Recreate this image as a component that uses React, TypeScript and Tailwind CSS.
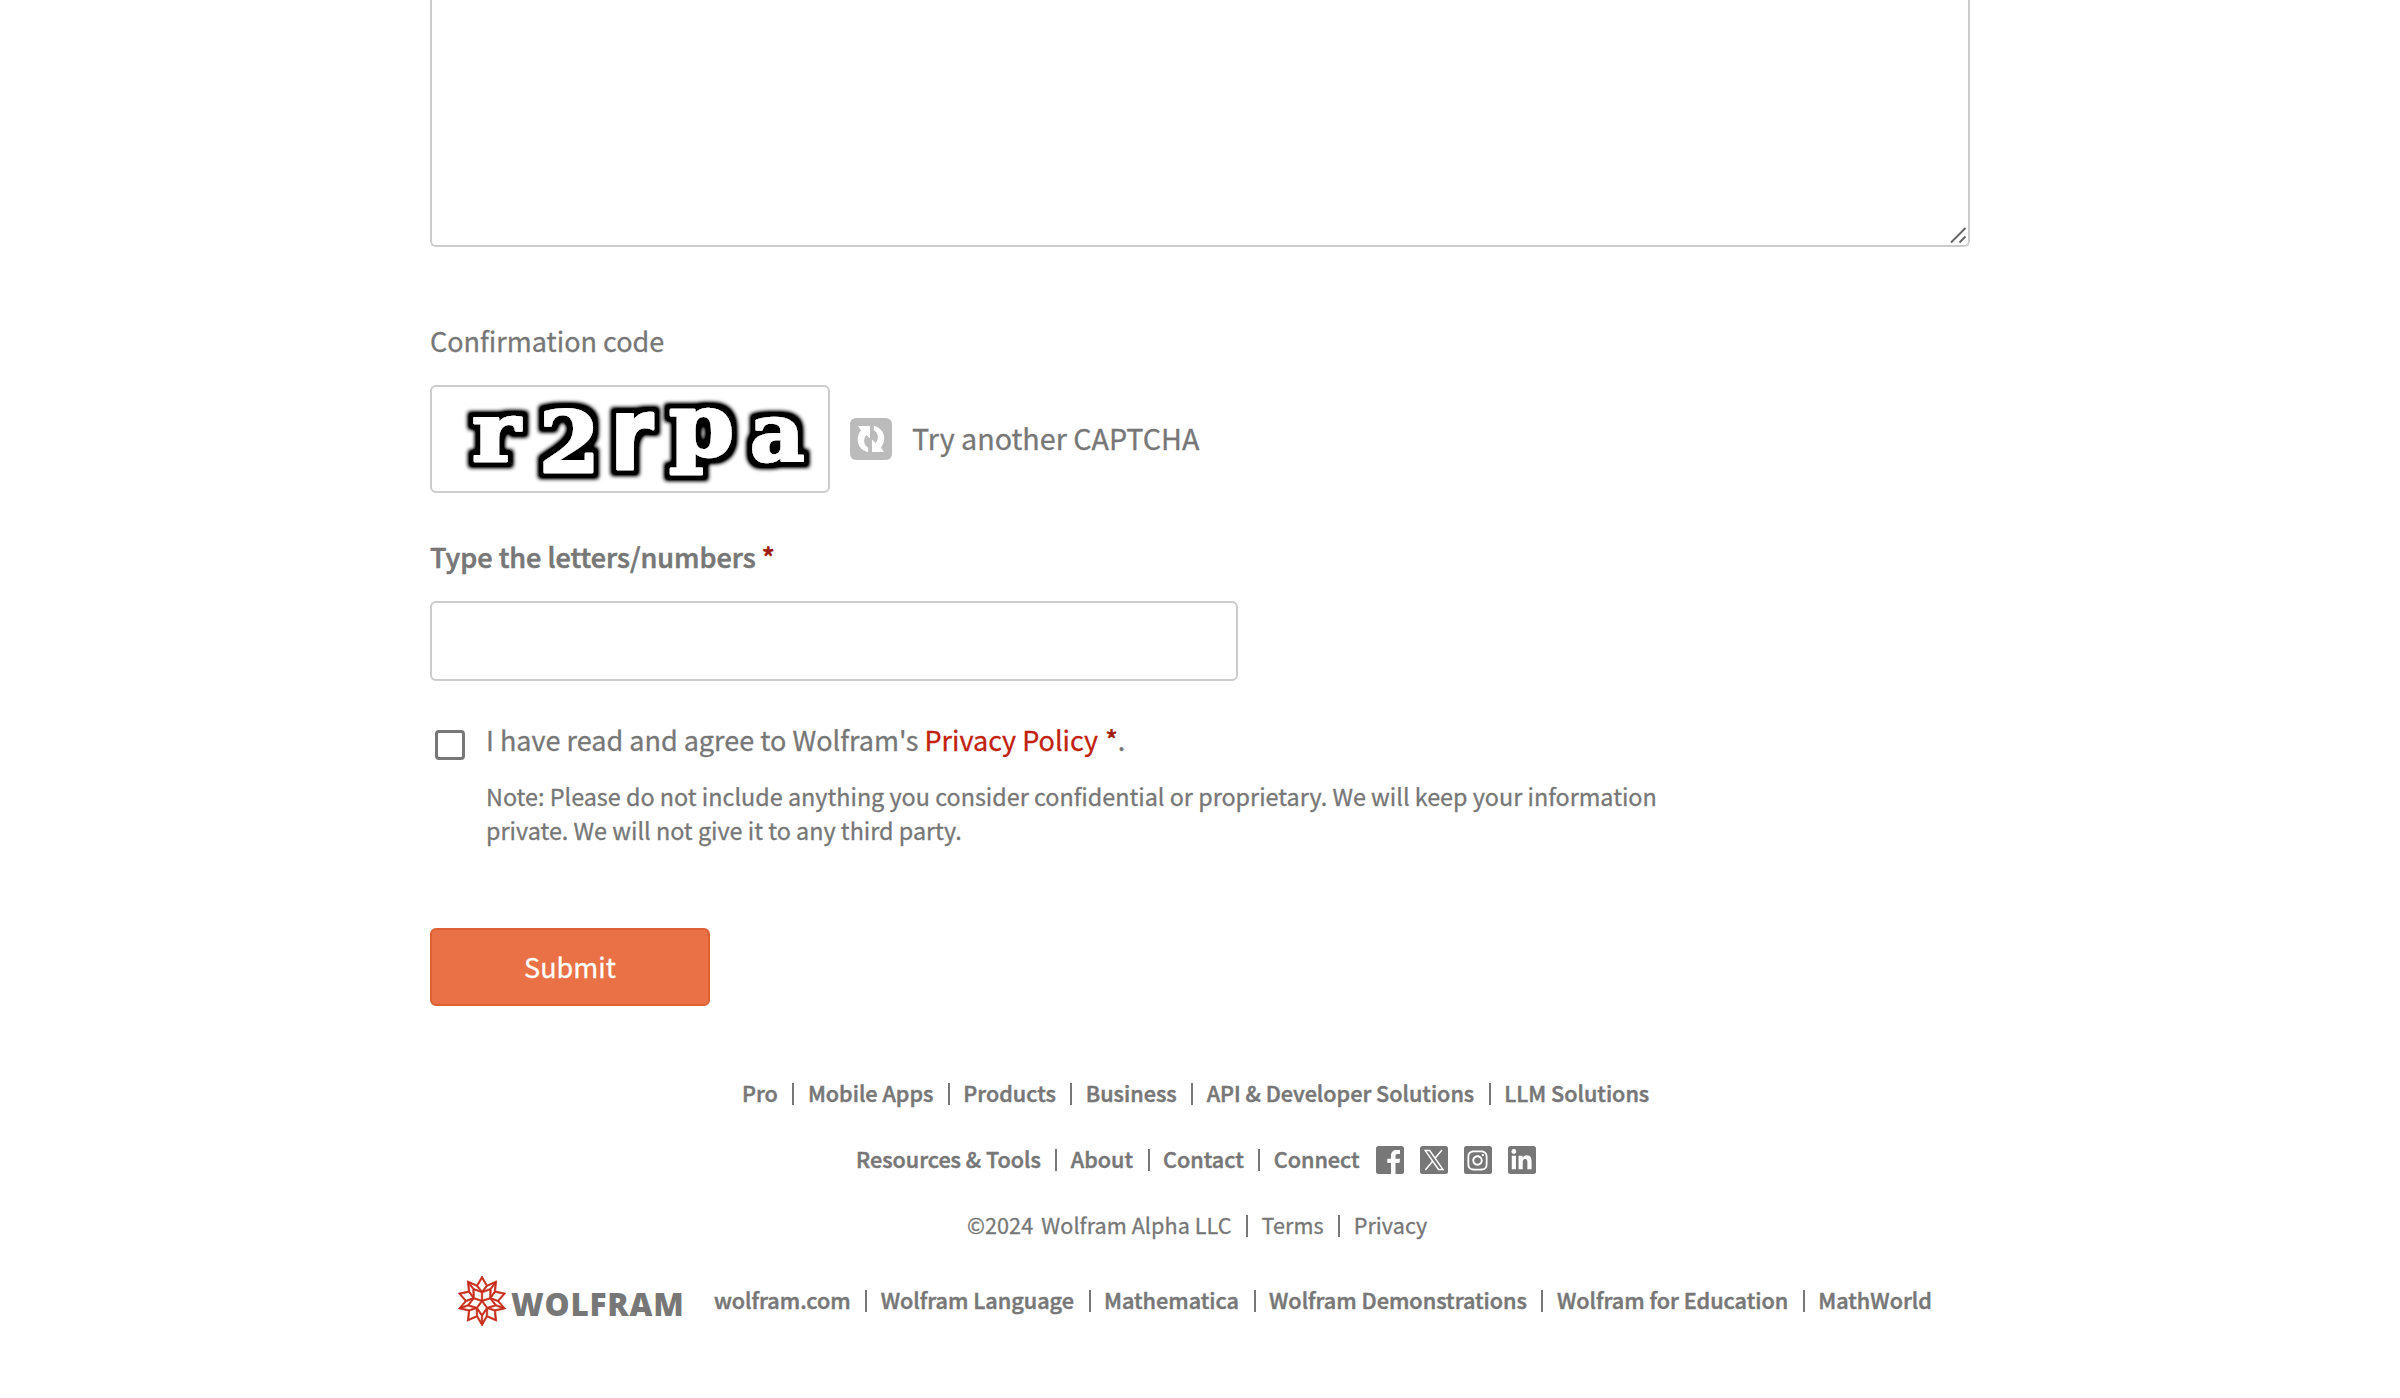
import { SiWolfram } from "react-icons/si";
import { FaInstagram, FaLinkedinIn } from "react-icons/fa";

function LinkRow({ items }: { items: string[] }) {
  return (
    <>
      {items.map((item, i) => (
        <div key={item} className="flex items-center">
          {i > 0 && <span className="mr-[13.5px] ml-[14.5px] mt-px h-[22px] w-[2px] bg-[#777]" />}
          <a className="whitespace-nowrap">{item}</a>
        </div>
      ))}
    </>
  );
}

const glyphs = [
  { ch: "r", x: 42, y: 76, sx: 1.12, size: 82, font: "font-['DejaVu_Serif',serif]" },
  { ch: "2", x: 109, y: 87, sx: 1.04, size: 84, font: "font-['DejaVu_Serif',serif]" },
  { ch: "r", x: 180, y: 84, sx: 0.88, size: 100, font: "font-['DejaVu_Sans',sans-serif]" },
  { ch: "p", x: 239, y: 71, sx: 1.06, size: 88, font: "font-['DejaVu_Serif',serif]" },
  { ch: "a", x: 320, y: 76, sx: 1.04, size: 81, font: "font-['DejaVu_Serif',serif]" },
];

function CodeImage() {
  return (
    <svg width="396" height="104" viewBox="2 2 396 104" className="overflow-visible">
      <defs>
        <filter id="outline" filterUnits="userSpaceOnUse" x="0" y="0" width="400" height="108">
          <feMorphology in="SourceAlpha" operator="dilate" radius="5" />
          <feGaussianBlur stdDeviation="2.2" />
          <feComponentTransfer result="edge">
            <feFuncA type="linear" slope="1.6" />
          </feComponentTransfer>
          <feMerge>
            <feMergeNode in="edge" />
            <feMergeNode in="SourceGraphic" />
          </feMerge>
        </filter>
      </defs>
      <g filter="url(#outline)" fill="#fff" stroke="#fff" strokeWidth="2.5" strokeLinejoin="round">
        {glyphs.map((g) => (
          <text
            key={g.x}
            transform={`translate(${g.x} ${g.y}) scale(${g.sx} 1)`}
            fontSize={g.size}
            className={`${g.font} font-bold [-webkit-text-stroke:2.5px_#fff]`}
          >
            {g.ch}
          </text>
        ))}
      </g>
    </svg>
  );
}

function RefreshIcon() {
  return (
    <svg width="42" height="42" viewBox="0 0 42 42" className="ml-5">
      <rect width="42" height="42" rx="6" fill="#bbb" />
      <g fill="#fff">
        <path d="M8 8H20V20.5L16.4 17C13 21 13.300 27 18.2 29.8V34.2C8 32 4.5 20.500 11 12.600Z" />
        <path d="M34 34H22V21.500L25.600 25C29 21 28.700 15 23.800 12.200V7.800C34 10 37.500 21.500 31 29.400Z" />
      </g>
    </svg>
  );
}

function Social() {
  return (
    <div className="mt-[2px] ml-4 flex gap-4">
      <svg width="28" height="28" viewBox="0 0 28 28">
        <rect width="28" height="28" rx="2.5" fill="#777" />
        <path d="M15 28V17H11.300V12.700H15V9.600C15 5.900 17.300 4 20.500 4H24V8H21.600C20 8 19.500 8.800 19.500 10V12.700H24L23.400 17H19.500V28Z" fill="#fff" />
      </svg>
      <svg width="28" height="28" viewBox="0 0 28 28">
        <rect width="28" height="28" rx="2.5" fill="#777" />
        <path d="M5.300 4.600H9.700L22.900 23.400H18.500Z" fill="none" stroke="#fff" strokeWidth="1.500" />
        <path d="M22 4L15 12.200M12.600 15.200L5.300 24" stroke="#fff" strokeWidth="1.500" />
      </svg>
      <div className="flex h-7 w-7 items-center justify-center rounded-[2.5px] bg-[#777]">
        <FaInstagram size={23} color="#fff" />
      </div>
      <div className="flex h-7 w-7 items-center justify-center rounded-[2.5px] bg-[#777]">
        <FaLinkedinIn size={23} color="#fff" />
      </div>
    </div>
  );
}

export default function App() {
  return (
    <div className="h-[1398px] w-[2400px] overflow-hidden bg-white font-['Noto_Sans_CJK_SC','Source_Sans_Pro',sans-serif] text-[27px] leading-10 text-[#777] [-webkit-text-stroke:0.3px_currentColor]">
      <main className="ml-[430px] w-[1540px]">
        <div className="flex h-[247px] items-end justify-end rounded-b-[6px] border-2 border-t-0 border-[#ccc]">
          <svg width="20" height="20" viewBox="0 0 20 20" stroke="#666" strokeWidth="2">
            <path d="M3 17.500L17.500 3M11.500 17.500L17.500 11.500" />
          </svg>
        </div>

        <label className="mt-[74px] block">Confirmation code</label>
        <div className="mt-[24px] flex items-center">
          <div className="h-[108px] w-[400px] rounded-[6px] border-2 border-[#ccc]">
            <CodeImage />
          </div>
          <RefreshIcon />
          <span className="ml-[20px] pb-[3px] text-[28.7px]">Try another CAPTCHA</span>
        </div>

        <label className="mt-[44px] block font-medium [-webkit-text-stroke:0.6px_currentColor]">
          Type the letters/numbers <span className="text-[#a11b0c]">*</span>
        </label>
        <div className="mt-[24px] h-[80px] w-[808px] rounded-[6px] border-2 border-[#ccc]" />

        <div className="mt-[39px] flex">
          <span className="mt-[10px] ml-[5px] h-[30px] w-[30px] rounded-[4px] border-3 border-[#777]" />
          <div className="ml-[21px]">
            <p className="h-10">
              I have read and agree to Wolfram's <a className="text-[#c1210f]">Privacy Policy</a>{" "}
              <span className="ml-px text-[#a11b0c] [-webkit-text-stroke:0.6px_currentColor]">*</span>.
            </p>
            <p className="mt-[19px] w-[1210px] text-[23.36px] leading-[34px]">
              Note: Please do not include anything you consider confidential or proprietary. We will keep your information
              <br />
              private. We will not give it to any third party.
            </p>
          </div>
        </div>

        <button className="mt-[81px] flex h-[78px] w-[280px] items-center justify-center rounded-[6px] border-2 border-[#dd6035] bg-[#ea7145] text-white">
          Submit
        </button>
      </main>

      <footer className="mt-[73px] text-[21.6px] leading-7">
        <div className="font-medium [-webkit-text-stroke:0.5px_currentColor]">
          <div className="flex h-7 pl-[742px]">
            <LinkRow items={["Pro", "Mobile Apps", "Products", "Business", "API & Developer Solutions", "LLM Solutions"]} />
          </div>
          <div className="mt-[38px] flex h-7 items-center pl-[856px]">
            <LinkRow items={["Resources & Tools", "About", "Contact", "Connect"]} />
            <Social />
          </div>
        </div>
        <div className="mt-[38px] flex h-7 pl-[967px] tracking-[0.06px]">
          <span className="mr-2">©2024</span>
          <LinkRow items={["Wolfram Alpha LLC", "Terms", "Privacy"]} />
        </div>
        <div className="mt-[37px] flex h-[50px] items-center pl-[457px] font-medium [-webkit-text-stroke:0.5px_currentColor]">
          <SiWolfram size={50} color="#c62a17" strokeWidth={0.35} />
          <span className="ml-[4px] w-[173px] pt-[6px] font-['Open_Sans',sans-serif] text-[31.5px] font-extrabold tracking-[0.8px] [-webkit-text-stroke:0px]">
            WOLFRAM
          </span>
          <div className="-mt-[2px] ml-[30px] flex h-7 text-[21.65px]">
            <LinkRow items={["wolfram.com", "Wolfram Language", "Mathematica", "Wolfram Demonstrations", "Wolfram for Education", "MathWorld"]} />
          </div>
        </div>
      </footer>
    </div>
  );
}
